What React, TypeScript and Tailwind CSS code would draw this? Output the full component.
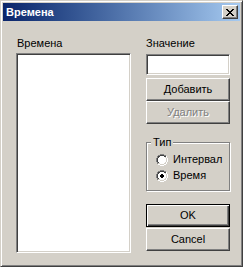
import React from "react";

const font = { fontFamily: '"Liberation Sans", Arial, sans-serif' };

function Radio({ checked }: { checked?: boolean }) {
  return (
    <svg width="12" height="12" viewBox="0 0 12 12" shapeRendering="crispEdges" className="shrink-0">
      {/* outer dark gray top-left */}
      <rect x="4" y="0" width="4" height="1" fill="#808080" />
      <rect x="2" y="1" width="2" height="1" fill="#808080" />
      <rect x="8" y="1" width="2" height="1" fill="#808080" />
      <rect x="1" y="2" width="1" height="2" fill="#808080" />
      <rect x="0" y="4" width="1" height="4" fill="#808080" />
      <rect x="1" y="8" width="1" height="2" fill="#808080" />
      {/* outer white bottom-right */}
      <rect x="10" y="2" width="1" height="2" fill="#ffffff" />
      <rect x="11" y="4" width="1" height="4" fill="#ffffff" />
      <rect x="10" y="8" width="1" height="2" fill="#ffffff" />
      <rect x="2" y="10" width="2" height="1" fill="#ffffff" />
      <rect x="8" y="10" width="2" height="1" fill="#ffffff" />
      <rect x="4" y="11" width="4" height="1" fill="#ffffff" />
      {/* inner dark */}
      <rect x="4" y="1" width="4" height="1" fill="#404040" />
      <rect x="2" y="2" width="2" height="1" fill="#404040" />
      <rect x="8" y="2" width="2" height="1" fill="#404040" />
      <rect x="2" y="3" width="1" height="1" fill="#404040" />
      <rect x="1" y="4" width="1" height="4" fill="#404040" />
      <rect x="2" y="8" width="1" height="1" fill="#404040" />
      {/* inner light */}
      <rect x="9" y="3" width="1" height="1" fill="#d4d0c8" />
      <rect x="10" y="4" width="1" height="4" fill="#d4d0c8" />
      <rect x="9" y="8" width="1" height="1" fill="#d4d0c8" />
      <rect x="2" y="9" width="2" height="1" fill="#d4d0c8" />
      <rect x="8" y="9" width="2" height="1" fill="#d4d0c8" />
      <rect x="4" y="10" width="4" height="1" fill="#d4d0c8" />
      {/* white fill */}
      <rect x="4" y="2" width="4" height="8" fill="#ffffff" />
      <rect x="3" y="3" width="6" height="6" fill="#ffffff" />
      <rect x="2" y="4" width="8" height="4" fill="#ffffff" />
      {checked && (
        <>
          <rect x="5" y="4" width="2" height="4" fill="#000" />
          <rect x="4" y="5" width="4" height="2" fill="#000" />
        </>
      )}
    </svg>
  );
}

function CloseGlyph() {
  const rows = [
    "XX....XX",
    ".XX..XX.",
    "..XXXX..",
    "...XX...",
    "..XXXX..",
    ".XX..XX.",
    "XX....XX",
  ];
  return (
    <svg width="8" height="7" viewBox="0 0 8 7" shapeRendering="crispEdges">
      {rows.flatMap((r, y) =>
        r.split("").map((c, x) =>
          c === "X" ? <rect key={`${x}-${y}`} x={x} y={y} width="1" height="1" fill="#000" /> : null
        )
      )}
    </svg>
  );
}

const raised =
  "border border-t-white border-l-white border-r-[#404040] border-b-[#404040] shadow-[inset_-1px_-1px_0_#808080] bg-[#d4d0c8]";
const sunken =
  "border border-t-[#808080] border-l-[#808080] border-r-white border-b-white shadow-[inset_1px_1px_0_#404040,inset_-1px_-1px_0_#d4d0c8] bg-white";

export default function App() {
  return (
    <div className="w-[246px] h-[271px] bg-white text-[11px] text-black" style={font}>
      <div className="w-[243px] h-[267px] border border-t-[#d4d0c8] border-l-[#d4d0c8] border-r-[#404040] border-b-[#404040] shadow-[inset_1px_1px_0_#ffffff,inset_-1px_-1px_0_#808080] p-[2px] bg-[#d4d0c8] flex flex-col">
        {/* Title bar */}
        <div className="h-[18px] flex items-center justify-between bg-linear-to-r from-[#0a246a] to-[#a6caf0] pl-[3px] pr-[2px]">
          <span className="text-white font-bold leading-[18px]">Времена</span>
          <div className={`w-[16px] h-[14px] ${raised} flex items-center justify-center`}>
            <CloseGlyph />
          </div>
        </div>
        {/* Client */}
        <div className="mt-[1px] flex-1 flex pl-[13px] pt-[15px]">
          <div className="w-[115px] flex flex-col">
            <div className="h-[13px] leading-[13px] pl-[1px]">Времена</div>
            <div className={`mt-[3px] h-[200px] ${sunken}`} />
          </div>
          <div className="ml-[15px] w-[84px] flex flex-col">
            <div className="h-[13px] leading-[13px]">Значение</div>
            <div className={`mt-[4px] h-[21px] ${sunken}`} />
            <div className={`mt-[3px] h-[23px] ${raised} flex items-center justify-center`}>Добавить</div>
            <div
              className={`h-[23px] ${raised} flex items-center justify-center text-[#808080] [text-shadow:1px_1px_0_#ffffff]`}
            >
              Удалить
            </div>
            <div className="mt-[12px] relative pt-[6px]">
              <div className="h-[49px] border border-[#808080] shadow-[inset_1px_1px_0_#ffffff,1px_1px_0_#ffffff] pt-[9px] pl-[9px] flex flex-col gap-[1px]">
                <div className="h-[15px] flex items-center gap-[5px]">
                  <Radio />
                  <span className="leading-[15px]">Интервал</span>
                </div>
                <div className="h-[15px] flex items-center gap-[5px]">
                  <Radio checked />
                  <span className="leading-[15px]">Время</span>
                </div>
              </div>
              <span className="absolute left-[5px] top-0 px-[2px] bg-[#d4d0c8] leading-[13px]">Тип</span>
            </div>
            <div className="mt-[13px] h-[23px] border border-black shadow-[inset_1px_1px_0_#ffffff,inset_-1px_-1px_0_#404040,inset_-2px_-2px_0_#808080] flex items-center justify-center">
              OK
            </div>
            <div className={`mt-[1px] h-[23px] ${raised} flex items-center justify-center`}>Cancel</div>
          </div>
        </div>
      </div>
    </div>
  );
}
